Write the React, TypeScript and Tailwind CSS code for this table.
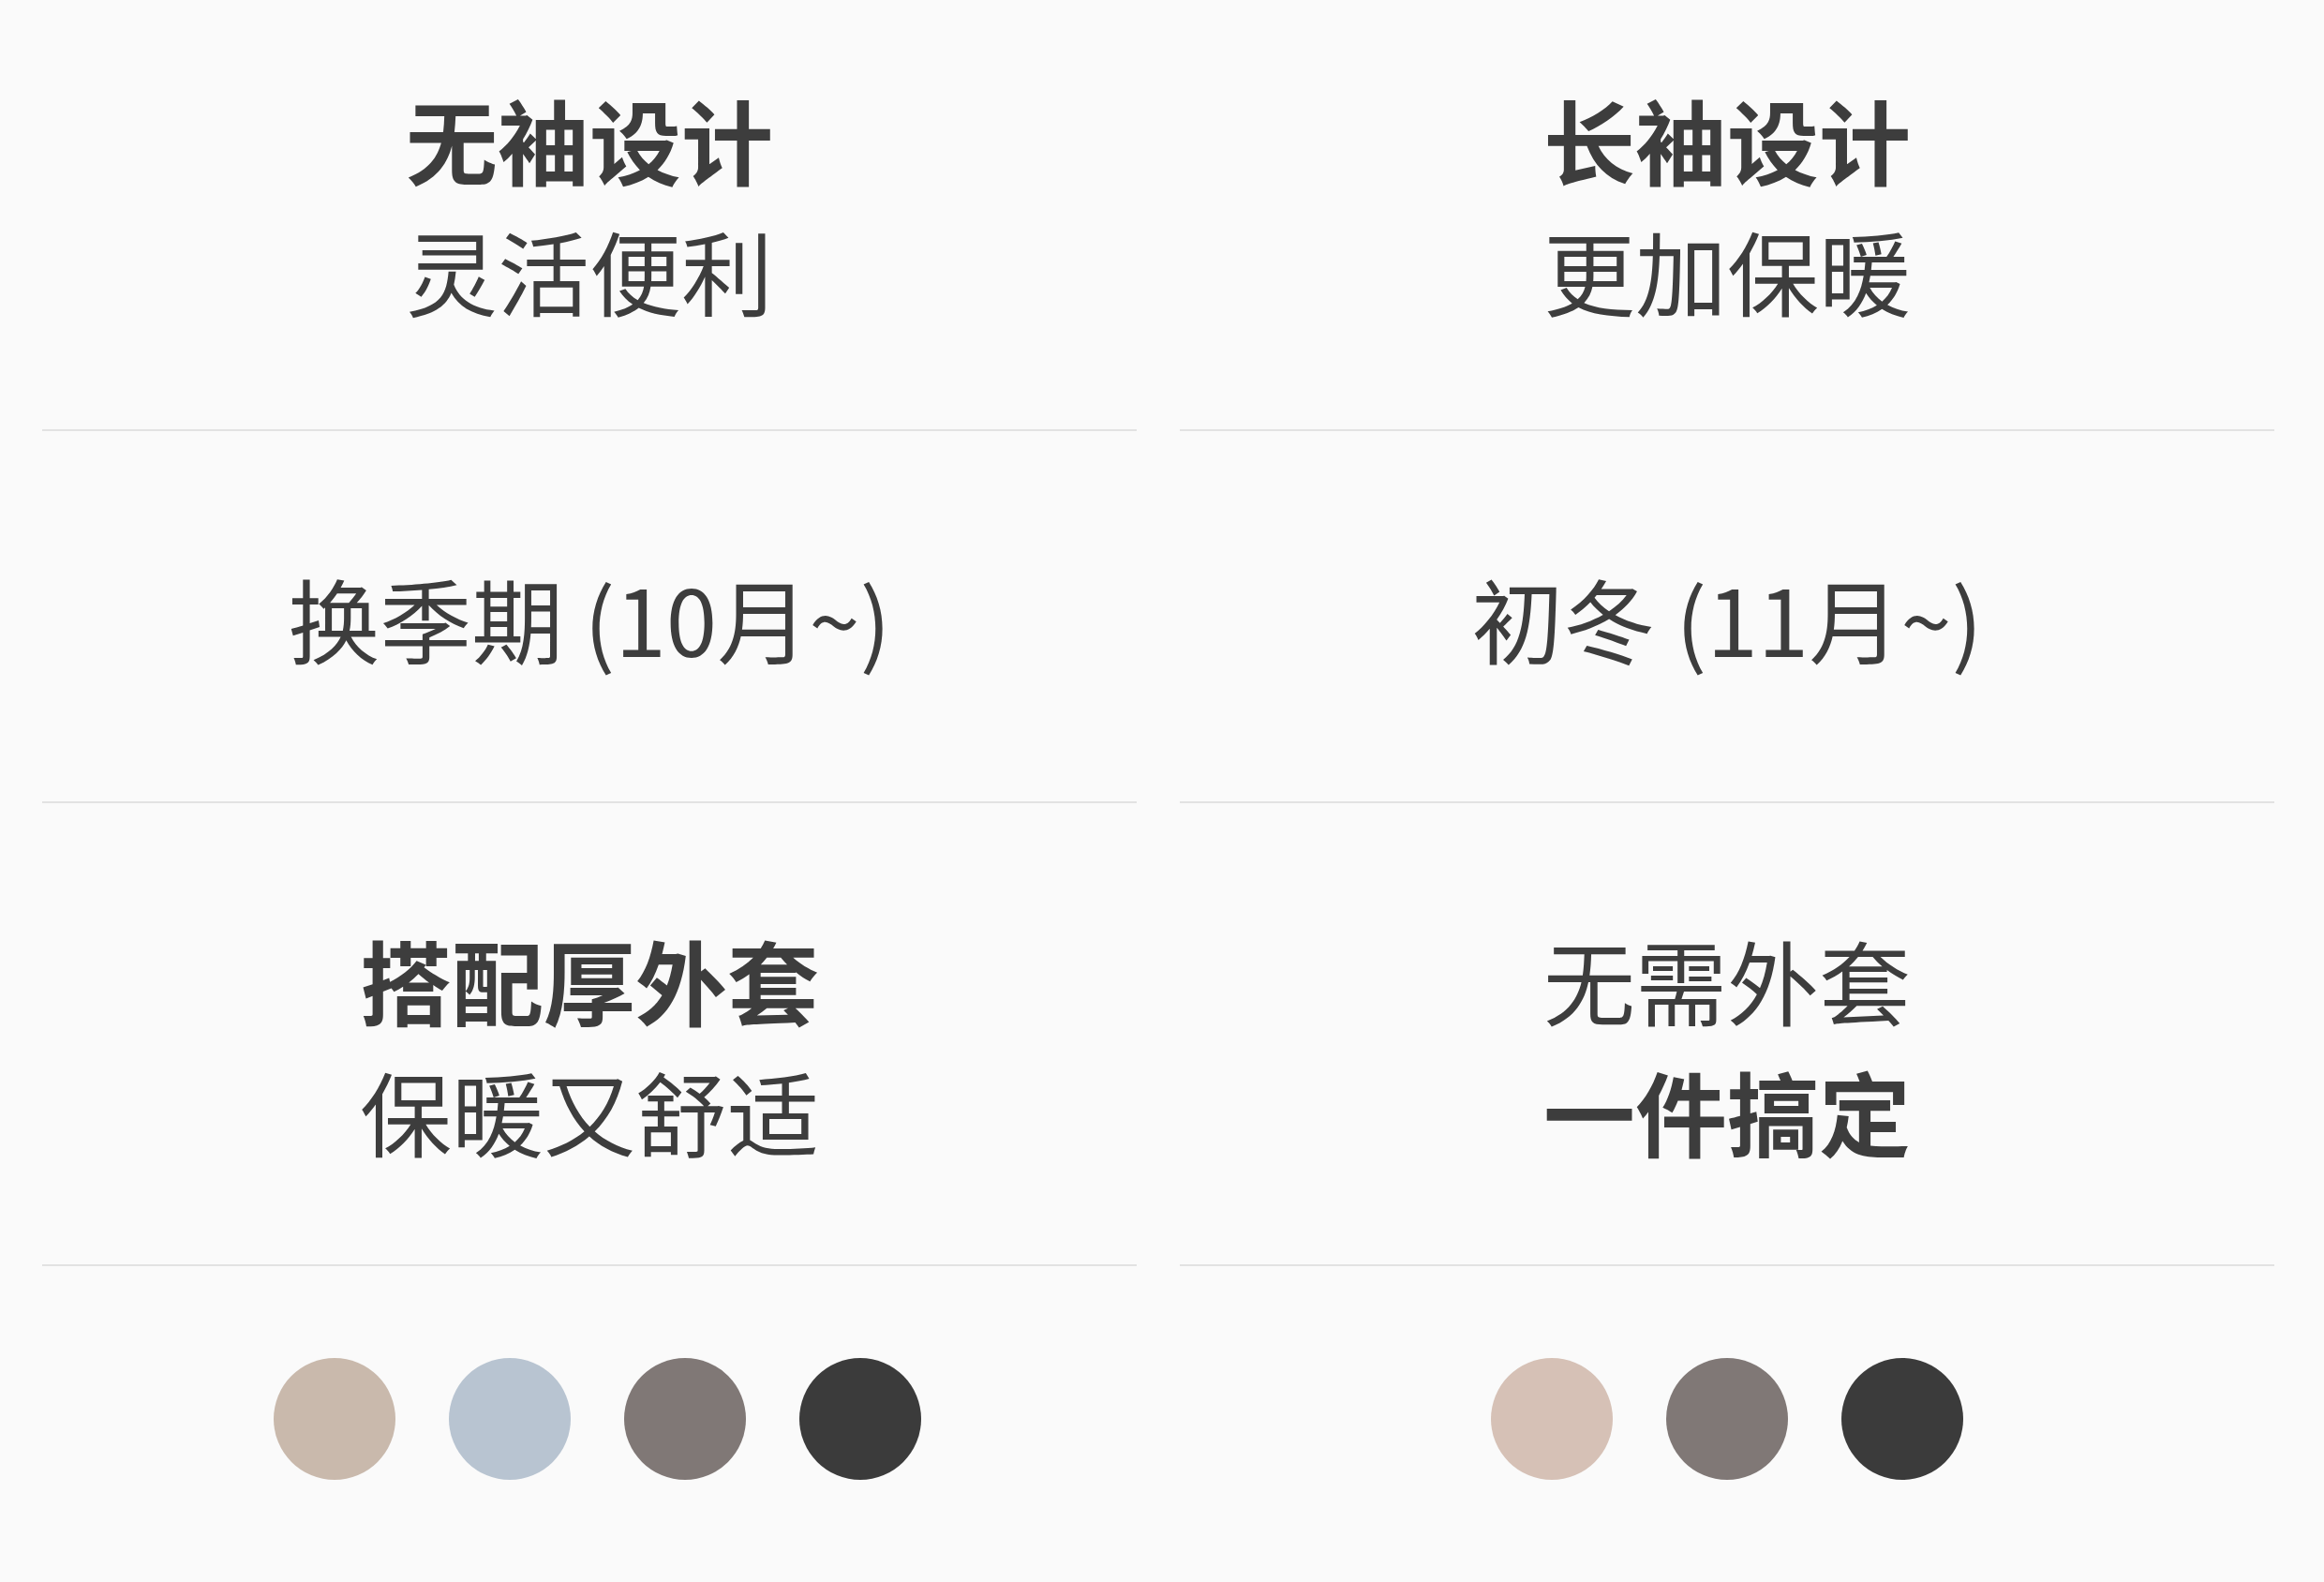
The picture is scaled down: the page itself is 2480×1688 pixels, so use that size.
const font = { fontFamily: '"Noto Sans CJK SC", "Noto Sans", sans-serif' };

type Col = {
  rows: { lines: { text: string; bold?: boolean }[] }[];
  colors: string[];
  swatchPad: string;
};

const columns: Col[] = [
  {
    rows: [
      { lines: [{ text: "无袖设计", bold: true }, { text: "灵活便利" }] },
      { lines: [{ text: "换季期 (10月~)" }] },
      { lines: [{ text: "搭配厚外套", bold: true }, { text: "保暖又舒适" }] },
    ],
    colors: ["bg-[#c9b9ac]", "bg-[#b8c4d1]", "bg-[#807876]", "bg-[#3b3b3b]"],
    swatchPad: "pl-[16px]",
  },
  {
    rows: [
      { lines: [{ text: "长袖设计", bold: true }, { text: "更加保暖" }] },
      { lines: [{ text: "初冬 (11月~)" }] },
      { lines: [{ text: "无需外套" }, { text: "一件搞定", bold: true }] },
    ],
    colors: ["bg-[#d6c1b6]", "bg-[#807876]", "bg-[#3b3b3b]"],
    swatchPad: "",
  },
];

const rowClass = [
  "h-[460px] pb-[24px]",
  "h-[397px]",
  "h-[494px] pt-[22px]",
];

function Column({ col }: { col: Col }) {
  return (
    <div className="flex flex-col">
      {col.rows.map((row, i) => (
        <div
          key={i}
          className={`${rowClass[i]} flex flex-col items-center justify-center border-b-2 border-[#e2e2e2]`}
        >
          {row.lines.map((l, j) => (
            <div
              key={j}
              className={`text-[98px] leading-[140px] text-[#3d3d3d] ${l.bold ? "font-bold" : "font-normal"}`}
            >
              {l.text}
            </div>
          ))}
        </div>
      ))}
      {/* color swatches */}
      <div className={`h-[337px] flex items-center justify-center gap-[57px] pb-[12px] ${col.swatchPad}`}>
        {col.colors.map((c, i) => (
          <div key={i} className={`w-[130px] h-[130px] rounded-full ${c}`} />
        ))}
      </div>
    </div>
  );
}

export default function App() {
  return (
    <div className="w-[2480px] h-[1688px] bg-[#fafafa] overflow-hidden" style={font}>
      <div className="grid grid-cols-2 gap-x-[46px] pl-[45px] pr-[53px]">
        {columns.map((c, i) => (
          <Column key={i} col={c} />
        ))}
      </div>
    </div>
  );
}
